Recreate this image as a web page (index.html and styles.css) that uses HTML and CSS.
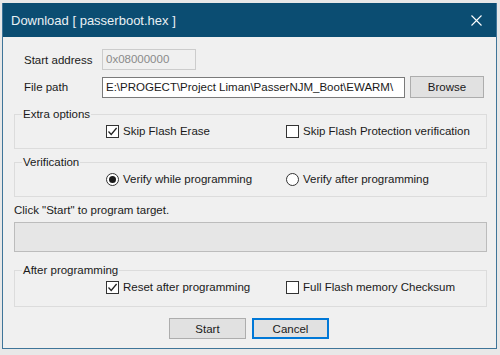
FILE: index.html
```html
<!DOCTYPE html>
<html lang="en">
<head>
    <meta charset="UTF-8">
    <meta name="viewport" content="width=device-width, initial-scale=1.0">
    <title>Download</title>
    <link rel="stylesheet" href="styles.css">
</head>
<body>
    <div class="window">
        <div class="titlebar">
            <span class="title">Download [ passerboot.hex ]</span>
            <span class="close">
                <svg width="11" height="11" viewBox="0 0 11 11"><path d="M0.5 0.5 L10.5 10.5 M10.5 0.5 L0.5 10.5" stroke="#ffffff" stroke-width="1.1" fill="none"/></svg>
            </span>
        </div>

        <div class="content">
            <div class="field-row row-address">
                <span class="field-label">Start address</span>
                <div class="textbox disabled address">0x08000000</div>
            </div>
            <div class="field-row row-path">
                <span class="field-label">File path</span>
                <div class="textbox path">E:\PROGECT\Project Liman\PasserNJM_Boot\EWARM\</div>
                <button class="btn browse">Browse</button>
            </div>

            <fieldset class="group group-extra">
                <legend>Extra options</legend>
                <div class="options">
                    <label class="option"><span class="check checked"><svg width="11" height="11" viewBox="0 0 11 11"><path d="M1.5 5.5 L4.2 8.4 L9.6 2" stroke="#222" stroke-width="1.3" fill="none"/></svg></span>Skip Flash Erase</label>
                    <label class="option"><span class="check"></span>Skip Flash Protection verification</label>
                </div>
            </fieldset>

            <fieldset class="group group-verify">
                <legend>Verification</legend>
                <div class="options">
                    <label class="option"><span class="radio selected"></span>Verify while programming</label>
                    <label class="option"><span class="radio"></span>Verify after programming</label>
                </div>
            </fieldset>

            <p class="hint">Click "Start" to program target.</p>
            <div class="progress"></div>

            <fieldset class="group group-after">
                <legend>After programming</legend>
                <div class="options">
                    <label class="option"><span class="check checked"><svg width="11" height="11" viewBox="0 0 11 11"><path d="M1.5 5.5 L4.2 8.4 L9.6 2" stroke="#222" stroke-width="1.3" fill="none"/></svg></span>Reset after programming</label>
                    <label class="option"><span class="check"></span>Full Flash memory Checksum</label>
                </div>
            </fieldset>

            <div class="actions">
                <button class="btn">Start</button>
                <button class="btn default">Cancel</button>
            </div>
        </div>
    </div>
</body>
</html>
```

FILE: styles.css
```css
* {
    box-sizing: border-box;
}
body {
    margin: 0;
    padding: 0;
    background: #e8e8e8;
    font-family: "Liberation Sans", Arial, sans-serif;
    font-size: 11.5px;
    color: #1a1a1a;
}
.window {
    margin: 3px 0 0 2px;
    width: 495px;
    height: 346px;
    background: #f0f0f0;
    border: 1px solid #3f7599;
    border-top: none;
}
.titlebar {
    height: 34px;
    background: #0b4d72;
    display: flex;
    align-items: center;
    justify-content: space-between;
    padding: 0 14px 0 8px;
}
.title {
    color: #e9f0f4;
    font-size: 13px;
}
.close {
    display: flex;
}
.field-row {
    display: flex;
    align-items: center;
    padding-left: 21px;
}
.row-address {
    margin-top: 12px;
    height: 21px;
}
.row-path {
    margin-top: 6px;
    height: 22px;
}
.field-label {
    width: 78px;
}
.textbox {
    height: 21px;
    line-height: 19px;
    padding: 0 3px;
    border: 1px solid #7a7a7a;
    background: #ffffff;
    white-space: nowrap;
    overflow: hidden;
}
.textbox.disabled {
    border-color: #cccccc;
    background: #f0f0f0;
    color: #8a8a8a;
}
.address {
    width: 94px;
}
.path {
    width: 303px;
}
.btn {
    font-family: inherit;
    font-size: 11.5px;
    color: #1a1a1a;
    background: #e1e1e1;
    border: 1px solid #adadad;
    height: 21px;
    width: 77px;
    padding: 0;
}
.browse {
    width: 74px;
    height: 22px;
    margin-left: 5px;
}
.btn.default {
    border-color: #0078d7;
    box-shadow: inset 0 0 0 1px #0078d7;
}
.group {
    margin: 0 9px 0 11px;
    width: 473px;
    border: 1px solid #dcdcdc;
    padding: 3px 0 10px 0;
    min-width: 0;
}
.group legend {
    margin-left: 7px;
    padding: 0 1px;
    line-height: 14px;
}
.group-extra {
    margin-top: 9px;
}
.group-verify {
    margin-top: 6px;
}
.group-after {
    margin-top: 11px;
    padding-bottom: 12px;
}
.options {
    display: grid;
    grid-template-columns: 180px 1fr;
    padding-left: 91px;
    height: 14px;
    align-items: center;
}
.option {
    display: flex;
    align-items: center;
    gap: 4px;
    white-space: nowrap;
}
.check {
    width: 13px;
    height: 13px;
    border: 1px solid #333333;
    background: #ffffff;
    display: flex;
    align-items: center;
    justify-content: center;
}
.radio {
    width: 13px;
    height: 13px;
    border: 1px solid #333333;
    border-radius: 50%;
    background: #ffffff;
    display: flex;
    align-items: center;
    justify-content: center;
}
.radio.selected::after {
    content: "";
    width: 7px;
    height: 7px;
    border-radius: 50%;
    background: #1a1a1a;
}
.hint {
    margin: 6px 0 0 11px;
    line-height: 14px;
}
.progress {
    margin: 5px 0 0 11px;
    width: 473px;
    height: 30px;
    background: #e6e6e6;
    border: 1px solid #bcbcbc;
}
.actions {
    display: flex;
    gap: 6px;
    margin-top: 11px;
    padding-left: 166px;
}
```
